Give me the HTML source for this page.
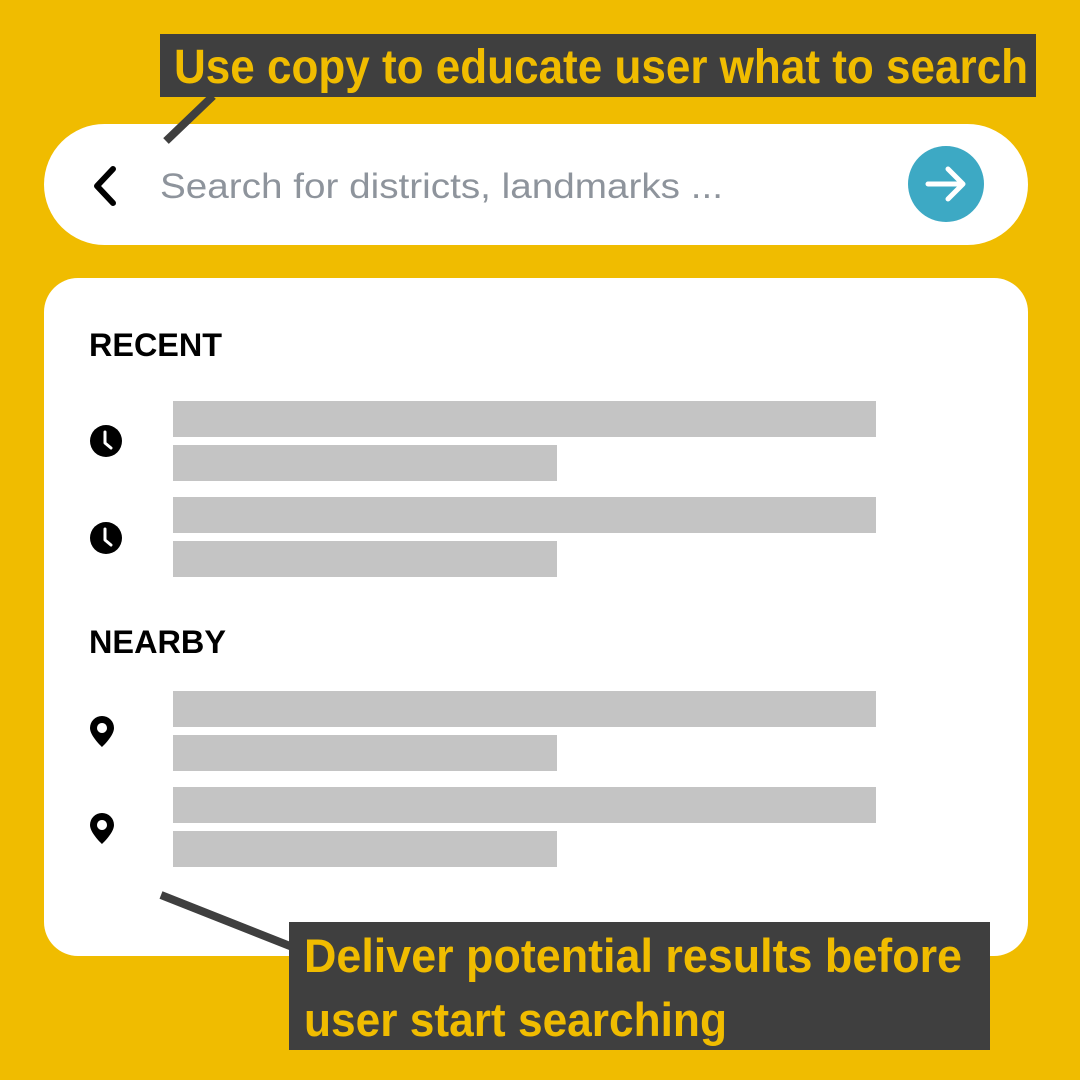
<!DOCTYPE html>
<html><head><meta charset="utf-8"><style>html,body{margin:0;padding:0;background:#F0BC00;}svg{display:block}</style></head>
<body>
<svg width="1080" height="1080" viewBox="0 0 1080 1080" xmlns="http://www.w3.org/2000/svg" font-family="Liberation Sans, sans-serif">
<rect width="1080" height="1080" fill="#F0BC00"/>
<rect x="44" y="124" width="984" height="121" rx="60.5" fill="#fff"/>
<path d="M113 169 L97 186 L113 203" fill="none" stroke="#000" stroke-width="6" stroke-linecap="round" stroke-linejoin="round"/>
<text x="160" y="198" font-size="35" fill="#8E949C" textLength="563" lengthAdjust="spacingAndGlyphs">Search for districts, landmarks ...</text>
<circle cx="946" cy="184" r="38" fill="#3DA9C4"/>
<path d="M928 184 H962 M948 169 L963 184 L948 199" fill="none" stroke="#fff" stroke-width="5" stroke-linecap="round" stroke-linejoin="round"/>
<line x1="213" y1="96" x2="166" y2="141" stroke="#3F3F3F" stroke-width="8"/>
<rect x="160" y="34" width="876" height="63" fill="#3F3F3F"/>
<text x="174" y="83" font-size="48" font-weight="bold" fill="#F0BC00" textLength="854" lengthAdjust="spacingAndGlyphs">Use copy to educate user what to search</text>
<rect x="44" y="278" width="984" height="678" rx="34" fill="#fff"/>
<text x="89" y="356" font-size="32" font-weight="bold" fill="#000" textLength="133" lengthAdjust="spacingAndGlyphs">RECENT</text>
<text x="89" y="653" font-size="32" font-weight="bold" fill="#000" textLength="137" lengthAdjust="spacingAndGlyphs">NEARBY</text>
<g fill="#C4C4C4">
<rect x="173" y="401" width="703" height="36"/><rect x="173" y="445" width="384" height="36"/>
<rect x="173" y="497" width="703" height="36"/><rect x="173" y="541" width="384" height="36"/>
<rect x="173" y="691" width="703" height="36"/><rect x="173" y="735" width="384" height="36"/>
<rect x="173" y="787" width="703" height="36"/><rect x="173" y="831" width="384" height="36"/>
</g>
<g>
<circle cx="106" cy="441" r="16" fill="#000"/>
<path d="M105 432 V443 L111 448" fill="none" stroke="#fff" stroke-width="3" stroke-linecap="round" stroke-linejoin="round"/>
<circle cx="106" cy="538" r="16" fill="#000"/>
<path d="M105 529 V540 L111 545" fill="none" stroke="#fff" stroke-width="3" stroke-linecap="round" stroke-linejoin="round"/>
</g>
<g fill="#000">
<path d="M102 716 a12 12 0 0 1 12 12 c0 8 -12 19 -12 19 c0 0 -12 -11 -12 -19 a12 12 0 0 1 12 -12 z M102 723 a5 5 0 1 0 0.01 0 z" fill-rule="evenodd"/>
<path d="M102 813 a12 12 0 0 1 12 12 c0 8 -12 19 -12 19 c0 0 -12 -11 -12 -19 a12 12 0 0 1 12 -12 z M102 820 a5 5 0 1 0 0.01 0 z" fill-rule="evenodd"/>
</g>
<line x1="161" y1="895" x2="295" y2="948" stroke="#3F3F3F" stroke-width="8"/>
<rect x="289" y="922" width="701" height="128" fill="#3F3F3F"/>
<text x="304" y="972" font-size="47" font-weight="bold" fill="#F0BC00" textLength="658" lengthAdjust="spacingAndGlyphs">Deliver potential results before</text>
<text x="304" y="1036" font-size="47" font-weight="bold" fill="#F0BC00" textLength="423" lengthAdjust="spacingAndGlyphs">user start searching</text>
</svg>
</body></html>
